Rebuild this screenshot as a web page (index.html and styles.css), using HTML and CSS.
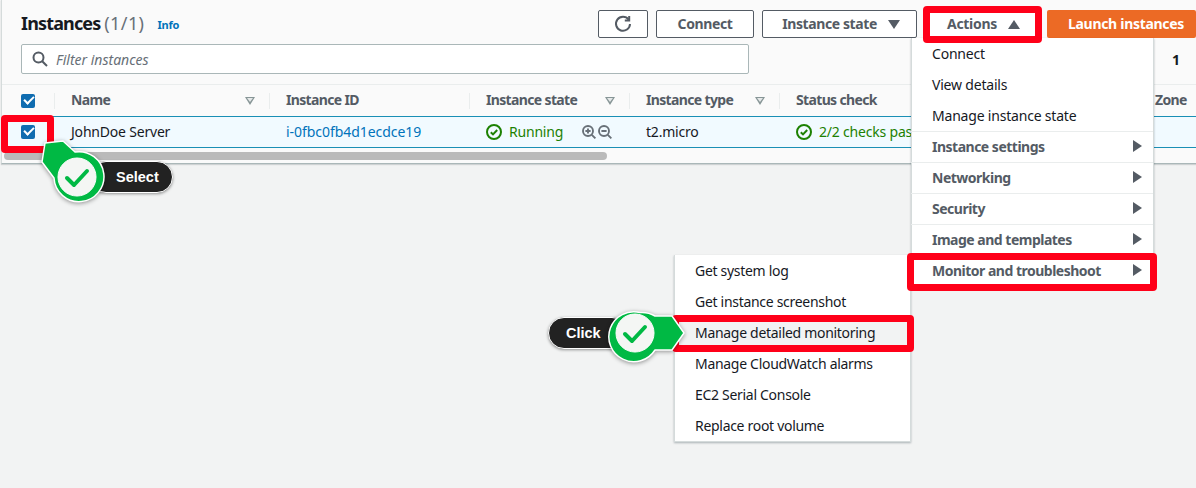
FILE: index.html
```html
<!DOCTYPE html>
<html lang="en">
<head>
    <meta charset="UTF-8">
    <meta name="viewport" content="width=device-width, initial-scale=1.0">
    <title>Instances</title>
    <link rel="stylesheet" href="styles.css">
</head>
<body>

    <div class="page">
        <section class="panel">
            <div class="panel-head">
                <h1 class="title">Instances <span class="count">(1/1)</span></h1>
                <a class="info">Info</a>
                <div class="actions">
                    <button class="btn btn-refresh" aria-label="Refresh">
                        <svg width="18" height="18" viewBox="0 0 18 18" fill="none" stroke="#545b64" stroke-width="2">
                            <path d="M14.6 4.6A7 7 0 1 0 16 9"/>
                            <path d="M15.2 1v4.4h-4.4" stroke-linejoin="miter"/>
                        </svg>
                    </button>
                    <button class="btn btn-connect">Connect</button>
                    <button class="btn btn-state">Instance state <i class="tri tri-down"></i></button>
                    <button class="btn btn-actions">Actions <i class="tri tri-up"></i></button>
                    <button class="btn btn-launch">Launch instances</button>
                </div>
            </div>

            <div class="filter-row">
                <div class="filter">
                    <svg width="16" height="16" viewBox="0 0 16 16" fill="none" stroke="#545b64" stroke-width="2">
                        <circle cx="6.5" cy="6.5" r="5"/>
                        <path d="M10.2 10.2L15 15"/>
                    </svg>
                    <span>Filter instances</span>
                </div>
                <span class="pager">1</span>
            </div>

            <div class="table">
                <div class="tr th">
                    <div class="cell cell-check"><i class="checkbox"></i></div>
                    <div class="cell">Name <i class="sort"></i></div>
                    <div class="cell">Instance ID</div>
                    <div class="cell">Instance state <i class="sort"></i></div>
                    <div class="cell">Instance type <i class="sort"></i></div>
                    <div class="cell">Status check</div>
                    <div class="cell">Zone</div>
                </div>
                <div class="tr td">
                    <div class="cell cell-check"><i class="checkbox"></i></div>
                    <div class="cell">JohnDoe Server</div>
                    <div class="cell"><a class="link">i-0fbc0fb4d1ecdce19</a></div>
                    <div class="cell status">
                        <svg class="ok" width="16" height="16" viewBox="0 0 16 16" fill="none" stroke="#1d8102" stroke-width="2">
                            <circle cx="8" cy="8" r="7"/>
                            <path d="M4.8 8.2l2.2 2.2 4.2-4.4"/>
                        </svg>
                        Running
                        <svg class="zoom-icons" width="30" height="15" viewBox="0 0 30 15" fill="none" stroke="#687078" stroke-width="1.9">
                            <circle cx="6" cy="6" r="5"/>
                            <path d="M9.8 9.8l3.6 3.6M3.4 6h5.2M6 3.4v5.2"/>
                            <circle cx="22" cy="6" r="5"/>
                            <path d="M25.8 9.8l3.6 3.6M19.4 6h5.2"/>
                        </svg>
                    </div>
                    <div class="cell">t2.micro</div>
                    <div class="cell status">
                        <svg class="ok" width="16" height="16" viewBox="0 0 16 16" fill="none" stroke="#1d8102" stroke-width="2">
                            <circle cx="8" cy="8" r="7"/>
                            <path d="M4.8 8.2l2.2 2.2 4.2-4.4"/>
                        </svg>
                        2/2 checks passed
                    </div>
                    <div class="cell"></div>
                </div>
            </div>
            <div class="scroll-track"><div class="scroll-thumb"></div></div>
        </section>

        <div class="menu menu-actions">
            <div class="item">Connect</div>
            <div class="item">View details</div>
            <div class="item">Manage instance state</div>
            <div class="item sub">Instance settings <i class="tri tri-right"></i></div>
            <div class="item sub">Networking <i class="tri tri-right"></i></div>
            <div class="item sub">Security <i class="tri tri-right"></i></div>
            <div class="item sub">Image and templates <i class="tri tri-right"></i></div>
            <div class="item sub">Monitor and troubleshoot <i class="tri tri-right"></i></div>
        </div>

        <div class="menu menu-monitor">
            <div class="item">Get system log</div>
            <div class="item">Get instance screenshot</div>
            <div class="item active">Manage detailed monitoring</div>
            <div class="item">Manage CloudWatch alarms</div>
            <div class="item">EC2 Serial Console</div>
            <div class="item">Replace root volume</div>
        </div>

        <!-- red highlights -->
        <div class="mark mark-check"></div>
        <div class="mark mark-actions"></div>
        <div class="mark mark-troubleshoot"></div>
        <div class="mark mark-monitoring"></div>

        <!-- callouts -->
        <div class="pill pill-select">Select</div>
        <svg class="badge badge-select" width="72" height="72" viewBox="0 0 72 72">
            <path class="badge-shape" d="M6 5L24 3L36 14A25 25 0 1 1 15 40L3 24Z"/>
            <circle class="badge-hole" cx="38" cy="39" r="19"/>
            <path class="badge-tick" d="M28 40l7 7 13-14"/>
        </svg>

        <div class="pill pill-click">Click</div>
        <svg class="badge badge-click" width="84" height="60" viewBox="0 0 84 60">
            <path class="badge-shape" d="M32 5.5A25 25 0 0 1 47 9L64 9L76 26L64 43L47 43A25 25 0 1 1 32 5.5Z"/>
            <circle class="badge-hole" cx="27" cy="26" r="19"/>
            <path class="badge-tick" d="M17 27l7 7 13-14"/>
        </svg>
    </div>

</body>
</html>
```

FILE: styles.css
```css
* {
    box-sizing: border-box;
}

body {
    margin: 0;
    background: #f2f3f3;
    font-family: "Noto Sans", "Open Sans", Arial, sans-serif;
    font-size: 14px;
    letter-spacing: -0.2px;
    color: #16191f;
}

.page {
    position: relative;
    height: 488px;
    overflow: hidden;
}

.panel {
    height: 164px;
    margin-left: 1px;
    background: #fafafa;
    border-left: 1px solid #d5dbdb;
    border-bottom: 1px solid #aab7b8;
    box-shadow: 0 1px 1px rgba(0, 28, 36, 0.15);
}

.panel-head {
    display: flex;
    align-items: flex-start;
    height: 38px;
    padding: 10px 0 0 19px;
}

.title {
    margin: 0;
    font-size: 18px;
    line-height: 27px;
    font-weight: 700;
    letter-spacing: -0.85px;
}

.count {
    font-weight: 400;
    letter-spacing: 0.4px;
    color: #687078;
}

.info {
    margin: 6px 0 0 13px;
    font-size: 11px;
    line-height: 18px;
    font-weight: 700;
    color: #0073bb;
}

.actions {
    display: flex;
    margin-left: auto;
    gap: 8px;
}

.btn {
    display: flex;
    align-items: center;
    justify-content: center;
    height: 28px;
    padding: 0 0 2px;
    background: #fff;
    border: 1px solid #545b64;
    border-radius: 2px;
    font-family: inherit;
    font-size: 14px;
    font-weight: 700;
    letter-spacing: -0.4px;
    color: #545b64;
}

.btn-refresh {
    width: 50px;
    padding: 0;
}

.btn-connect {
    width: 98px;
}

.btn-state {
    width: 155px;
    padding-left: 3px;
    gap: 11px;
}

.btn-actions {
    width: 115px;
    padding-left: 2px;
    letter-spacing: -0.3px;
    gap: 11px;
}

.btn-launch {
    width: 149px;
    margin-left: -1px;
    padding-left: 9px;
    background: #ec6a25;
    border: none;
    letter-spacing: -0.3px;
    color: #fff;
}

.tri {
    display: inline-block;
    width: 0;
    height: 0;
    border-style: solid;
    border-color: transparent;
}

.tri-down {
    margin-top: 2px;
    border-width: 9px 6px 0;
    border-top-color: #545b64;
}

.tri-up {
    margin-top: 2px;
    border-width: 0 6px 9px;
    border-bottom-color: #545b64;
}

.tri-right {
    border-width: 6px 0 6px 9px;
    border-left-color: #545b64;
}

.filter-row {
    display: flex;
    align-items: center;
    margin-top: 6px;
    padding-left: 19px;
}

.filter {
    display: flex;
    align-items: center;
    gap: 8px;
    width: 728px;
    height: 30px;
    padding-left: 10px;
    background: #fff;
    border: 1px solid #aab7b8;
    border-radius: 2px;
    font-style: italic;
    letter-spacing: 0;
    color: #687078;
}

.pager {
    margin-left: 423px;
    font-weight: 700;
}

.table {
    margin-top: 10px;
    border-top: 1px solid #eaeded;
}

.tr {
    display: grid;
    grid-template-columns: 52px 215px 200px 160px 150px 359px 1fr;
    height: 32px;
}

.cell {
    position: relative;
    display: flex;
    align-items: center;
    padding: 0 0 2px 17px;
    white-space: nowrap;
}

.cell-check {
    padding-left: 19px;
}

.th {
    height: 31px;
    font-weight: 700;
    letter-spacing: -0.65px;
    color: #545b64;
}

.th .cell + .cell::before {
    content: "";
    position: absolute;
    left: 0;
    top: 8px;
    height: 16px;
    border-left: 1px solid #eaeded;
}

.sort {
    position: absolute;
    right: 14px;
    top: 12px;
    width: 0;
    height: 0;
    border-style: solid;
    border-width: 8px 5px 0;
    border-color: #879596 transparent transparent;
}

.sort::after {
    content: "";
    position: absolute;
    left: -3px;
    top: -7px;
    width: 0;
    height: 0;
    border-style: solid;
    border-width: 4px 3px 0;
    border-color: #e6e9e9 transparent transparent;
}

.td {
    background: #f1faff;
    border-top: 1px solid #1a8fb5;
    border-bottom: 1px solid #1a8fb5;
}

.checkbox {
    position: relative;
    display: block;
    width: 14px;
    height: 14px;
    margin-top: 2px;
    background: #0f6cb0;
    border-radius: 2px;
}

.checkbox::after {
    content: "";
    position: absolute;
    left: 3px;
    top: 2px;
    width: 8px;
    height: 4px;
    border-left: 2px solid #fff;
    border-bottom: 2px solid #fff;
    transform: rotate(-45deg);
}

.link {
    letter-spacing: -0.05px;
    color: #0073bb;
}

.status {
    color: #1d8102;
    overflow: hidden;
}

.ok {
    flex: none;
    margin: 2px 7px 0 0;
}

.zoom-icons {
    margin: 2px 0 0 19px;
}

.scroll-track {
    padding: 4px 0 0 2px;
}

.scroll-thumb {
    width: 603px;
    height: 8px;
    background: #bababa;
    border-radius: 4px;
}

.menu {
    position: absolute;
    background: #fff;
    border: 1px solid #d5dbdb;
    border-top: none;
    box-shadow: 0 1px 2px rgba(0, 28, 36, 0.3);
}

.menu-actions {
    left: 911px;
    top: 38px;
    width: 243px;
}

.menu-monitor {
    left: 674px;
    top: 255px;
    width: 237px;
    letter-spacing: -0.3px;
}

.item {
    display: flex;
    align-items: center;
    justify-content: space-between;
    height: 31px;
    padding: 0 12px 0 21px;
    margin-left: -1px;
}

.sub {
    padding: 0 11px 2px 21px;
    font-weight: 700;
    letter-spacing: -0.5px;
    color: #545b64;
    border-top: 1px solid #eaeded;
}

.active {
    background: #f2f3f3;
}

.mark {
    position: absolute;
    border: 7px solid #ff0019;
    border-radius: 4px;
}

.mark-check {
    left: 1px;
    top: 115px;
    width: 53px;
    height: 38px;
}

.mark-actions {
    left: 923px;
    top: 6px;
    width: 119px;
    height: 37px;
}

.mark-troubleshoot {
    left: 907px;
    top: 253px;
    width: 250px;
    height: 38px;
}

.mark-monitoring {
    left: 672px;
    top: 315px;
    width: 242px;
    height: 37px;
}

.pill {
    position: absolute;
    height: 32px;
    background: #222;
    border: 1px solid #fff;
    border-radius: 16px;
    box-shadow: 0 1px 3px rgba(0, 0, 0, 0.4);
    font-family: "Liberation Sans", Arial, sans-serif;
    font-size: 14.5px;
    font-weight: 700;
    letter-spacing: 0;
    line-height: 30px;
    color: #fff;
}

.pill-select {
    left: 90px;
    top: 161px;
    width: 83px;
    padding-left: 25px;
}

.pill-click {
    left: 548px;
    top: 317px;
    width: 80px;
    padding-left: 17px;
}

.badge {
    position: absolute;
    filter: drop-shadow(0 1px 2px rgba(0, 0, 0, 0.4));
}

.badge-select {
    left: 39px;
    top: 138px;
}

.badge-click {
    left: 608px;
    top: 307px;
}

.badge-shape {
    fill: #00b944;
    stroke: #fff;
    stroke-width: 1.5;
    stroke-linejoin: round;
}

.badge-hole {
    fill: #f4f6f4;
    stroke: #fff;
    stroke-width: 1;
}

.badge-tick {
    fill: none;
    stroke: #00b944;
    stroke-width: 4;
    stroke-linecap: round;
    stroke-linejoin: round;
}
```
